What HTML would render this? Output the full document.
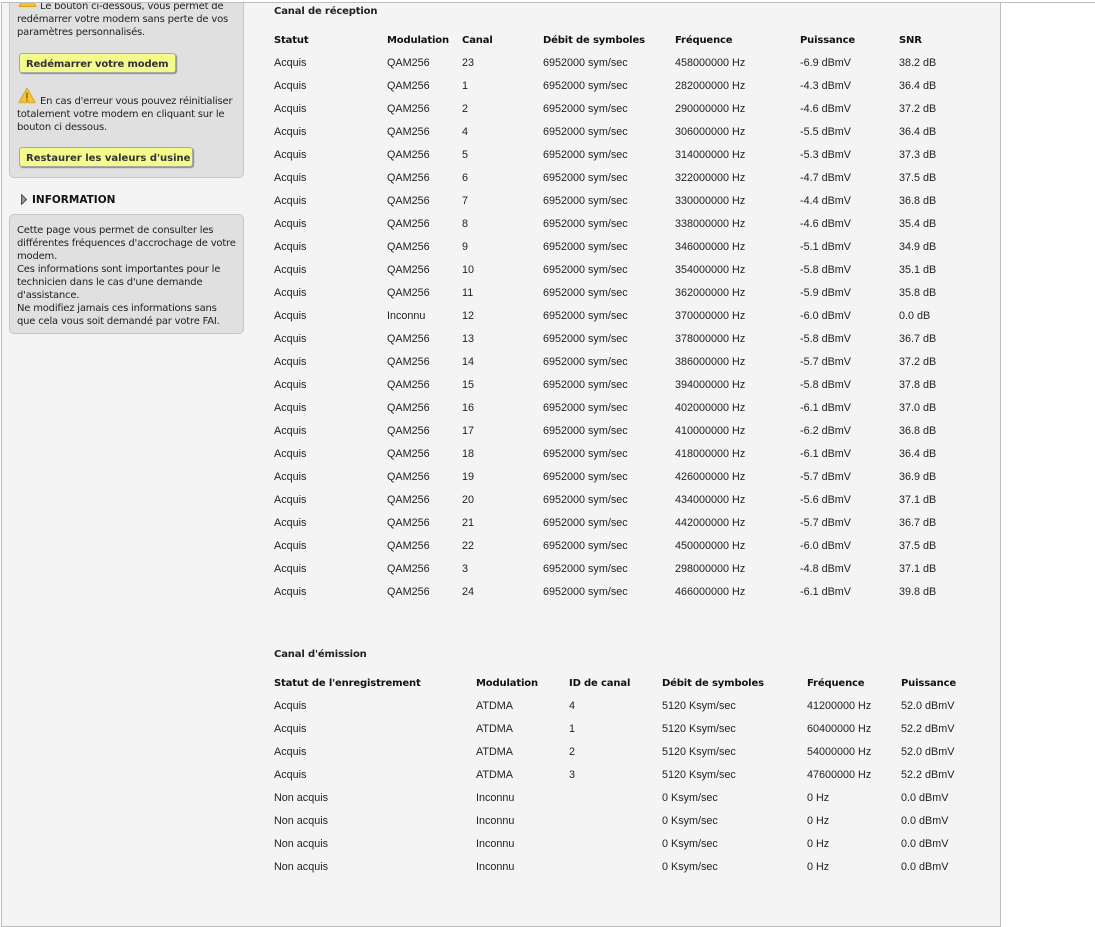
<!DOCTYPE html>
<html><head><meta charset="utf-8"><style>
html,body{margin:0;padding:0;background:#fff;width:1095px;height:927px;overflow:hidden}
body{font-family:"Liberation Sans",sans-serif;font-size:11px;color:#222;position:relative}
#top{position:absolute;left:1px;top:2px;width:1094px;height:1px;background:#bdbdbd}
#panel{position:absolute;left:1px;top:2px;width:998px;height:923px;background:#f4f4f4;border:1px solid #bdbdbd;overflow:hidden}
.abs{position:absolute;left:0;top:0;width:1095px;height:927px}
.box{position:absolute;left:9px;width:233px;background:#e0e0e0;border:1px solid #c6c6c6;border-radius:5px}
.t{position:absolute;left:17px;line-height:13px;white-space:nowrap;color:#222;font-family:"DejaVu Sans",sans-serif;font-size:10px;letter-spacing:-.2px}
.btn{position:absolute;left:20px;height:18px;line-height:21px;padding-left:6px;box-sizing:border-box;background:#f5fa8c;box-shadow:0 0 0 1px #a8a8a8,1px 1px 1px 1px #8a8a8a;border-radius:2px;font-family:"DejaVu Sans",sans-serif;font-weight:bold;font-size:10px;letter-spacing:-.15px;color:#333;text-align:left;white-space:nowrap}
h4{position:absolute;margin:0;font-family:"DejaVu Sans",sans-serif;font-size:10px;letter-spacing:-.15px;font-weight:bold;color:#222;line-height:13px;white-space:nowrap}
table{position:absolute;left:274px;border-collapse:collapse;table-layout:fixed;font-family:"Liberation Sans",sans-serif;font-size:10.8px}
td,th{padding:0;height:23px;line-height:23px;text-align:left;white-space:nowrap;font-weight:normal;color:#222}
th{font-family:"DejaVu Sans",sans-serif;font-weight:bold;font-size:10px;letter-spacing:-.15px;color:#111}
</style></head><body>
<div id="top"></div>
<div id="panel"></div>
<div class="abs" style="clip-path:inset(3px 0 0 0)">
<div class="box" style="top:-20px;height:196px"></div>
<svg style="position:absolute;left:18px;top:-9px" width="19" height="17" viewBox="0 0 19 17"><path d="M9.5 1L18 15.5H1Z" fill="#f5c02c" stroke="#d9a520" stroke-linejoin="round"/></svg>
<div class="t" style="top:0;left:40px">Le bouton ci-dessous, vous permet de</div>
<div class="t" style="top:13px">redémarrer votre modem sans perte de vos</div>
<div class="t" style="top:26px">paramètres personnalisés.</div>
<div class="btn" style="top:54px;width:155px">Redémarrer votre modem</div>
<svg style="position:absolute;left:18px;top:87px" width="18" height="17" viewBox="0 0 18 17"><path d="M9 1.2L17 15.5H1Z" fill="#f7c534" stroke="#dcae3a" stroke-width="1.4" stroke-linejoin="round"/><rect x="8.2" y="5.5" width="1.6" height="6" fill="#8a6a20"/><rect x="8.2" y="12.5" width="1.6" height="1.6" fill="#8a6a20"/></svg>
<div class="t" style="top:95px;left:40px">En cas d'erreur vous pouvez réinitialiser</div>
<div class="t" style="top:108px">totalement votre modem en cliquant sur le</div>
<div class="t" style="top:121px">bouton ci dessous.</div>
<div class="btn" style="top:148px;width:172px;letter-spacing:0">Restaurer les valeurs d'usine</div>
<svg style="position:absolute;left:21px;top:194px" width="6" height="11" viewBox="0 0 6 11"><path d="M.5 .5L5.5 5.5L.5 10.5Z" fill="#999" stroke="#333" stroke-width=".8"/></svg>
<h4 style="left:32px;top:194px;color:#111;font-size:10.5px;letter-spacing:0">INFORMATION</h4>
<div class="box" style="top:214px;height:118px"></div>
<div class="t" style="top:224px">Cette page vous permet de consulter les</div>
<div class="t" style="top:237px">différentes fréquences d'accrochage de votre</div>
<div class="t" style="top:250px">modem.</div>
<div class="t" style="top:263px">Ces informations sont importantes pour le</div>
<div class="t" style="top:276px">technicien dans le cas d'une demande</div>
<div class="t" style="top:289px">d'assistance.</div>
<div class="t" style="top:302px">Ne modifiez jamais ces informations sans</div>
<div class="t" style="top:315px">que cela vous soit demandé par votre FAI.</div>
<h4 style="left:274px;top:5px">Canal de réception</h4>
<table style="top:29px;width:720px">
<colgroup><col style="width:113px"><col style="width:75px"><col style="width:81px"><col style="width:132px"><col style="width:125px"><col style="width:99px"><col style="width:95px"></colgroup>
<tr><th>Statut</th><th>Modulation</th><th>Canal</th><th>Débit de symboles</th><th>Fréquence</th><th>Puissance</th><th>SNR</th></tr>
<tr><td>Acquis</td><td>QAM256</td><td>23</td><td>6952000 sym/sec</td><td>458000000 Hz</td><td>-6.9 dBmV</td><td>38.2 dB</td></tr>
<tr><td>Acquis</td><td>QAM256</td><td>1</td><td>6952000 sym/sec</td><td>282000000 Hz</td><td>-4.3 dBmV</td><td>36.4 dB</td></tr>
<tr><td>Acquis</td><td>QAM256</td><td>2</td><td>6952000 sym/sec</td><td>290000000 Hz</td><td>-4.6 dBmV</td><td>37.2 dB</td></tr>
<tr><td>Acquis</td><td>QAM256</td><td>4</td><td>6952000 sym/sec</td><td>306000000 Hz</td><td>-5.5 dBmV</td><td>36.4 dB</td></tr>
<tr><td>Acquis</td><td>QAM256</td><td>5</td><td>6952000 sym/sec</td><td>314000000 Hz</td><td>-5.3 dBmV</td><td>37.3 dB</td></tr>
<tr><td>Acquis</td><td>QAM256</td><td>6</td><td>6952000 sym/sec</td><td>322000000 Hz</td><td>-4.7 dBmV</td><td>37.5 dB</td></tr>
<tr><td>Acquis</td><td>QAM256</td><td>7</td><td>6952000 sym/sec</td><td>330000000 Hz</td><td>-4.4 dBmV</td><td>36.8 dB</td></tr>
<tr><td>Acquis</td><td>QAM256</td><td>8</td><td>6952000 sym/sec</td><td>338000000 Hz</td><td>-4.6 dBmV</td><td>35.4 dB</td></tr>
<tr><td>Acquis</td><td>QAM256</td><td>9</td><td>6952000 sym/sec</td><td>346000000 Hz</td><td>-5.1 dBmV</td><td>34.9 dB</td></tr>
<tr><td>Acquis</td><td>QAM256</td><td>10</td><td>6952000 sym/sec</td><td>354000000 Hz</td><td>-5.8 dBmV</td><td>35.1 dB</td></tr>
<tr><td>Acquis</td><td>QAM256</td><td>11</td><td>6952000 sym/sec</td><td>362000000 Hz</td><td>-5.9 dBmV</td><td>35.8 dB</td></tr>
<tr><td>Acquis</td><td>Inconnu</td><td>12</td><td>6952000 sym/sec</td><td>370000000 Hz</td><td>-6.0 dBmV</td><td>0.0 dB</td></tr>
<tr><td>Acquis</td><td>QAM256</td><td>13</td><td>6952000 sym/sec</td><td>378000000 Hz</td><td>-5.8 dBmV</td><td>36.7 dB</td></tr>
<tr><td>Acquis</td><td>QAM256</td><td>14</td><td>6952000 sym/sec</td><td>386000000 Hz</td><td>-5.7 dBmV</td><td>37.2 dB</td></tr>
<tr><td>Acquis</td><td>QAM256</td><td>15</td><td>6952000 sym/sec</td><td>394000000 Hz</td><td>-5.8 dBmV</td><td>37.8 dB</td></tr>
<tr><td>Acquis</td><td>QAM256</td><td>16</td><td>6952000 sym/sec</td><td>402000000 Hz</td><td>-6.1 dBmV</td><td>37.0 dB</td></tr>
<tr><td>Acquis</td><td>QAM256</td><td>17</td><td>6952000 sym/sec</td><td>410000000 Hz</td><td>-6.2 dBmV</td><td>36.8 dB</td></tr>
<tr><td>Acquis</td><td>QAM256</td><td>18</td><td>6952000 sym/sec</td><td>418000000 Hz</td><td>-6.1 dBmV</td><td>36.4 dB</td></tr>
<tr><td>Acquis</td><td>QAM256</td><td>19</td><td>6952000 sym/sec</td><td>426000000 Hz</td><td>-5.7 dBmV</td><td>36.9 dB</td></tr>
<tr><td>Acquis</td><td>QAM256</td><td>20</td><td>6952000 sym/sec</td><td>434000000 Hz</td><td>-5.6 dBmV</td><td>37.1 dB</td></tr>
<tr><td>Acquis</td><td>QAM256</td><td>21</td><td>6952000 sym/sec</td><td>442000000 Hz</td><td>-5.7 dBmV</td><td>36.7 dB</td></tr>
<tr><td>Acquis</td><td>QAM256</td><td>22</td><td>6952000 sym/sec</td><td>450000000 Hz</td><td>-6.0 dBmV</td><td>37.5 dB</td></tr>
<tr><td>Acquis</td><td>QAM256</td><td>3</td><td>6952000 sym/sec</td><td>298000000 Hz</td><td>-4.8 dBmV</td><td>37.1 dB</td></tr>
<tr><td>Acquis</td><td>QAM256</td><td>24</td><td>6952000 sym/sec</td><td>466000000 Hz</td><td>-6.1 dBmV</td><td>39.8 dB</td></tr>
</table>
<h4 style="left:274px;top:648px">Canal d'émission</h4>
<table style="top:672px;width:720px">
<colgroup><col style="width:202px"><col style="width:93px"><col style="width:93px"><col style="width:145px"><col style="width:94px"><col style="width:93px"></colgroup>
<tr><th>Statut de l'enregistrement</th><th>Modulation</th><th>ID de canal</th><th>Débit de symboles</th><th>Fréquence</th><th>Puissance</th></tr>
<tr><td>Acquis</td><td>ATDMA</td><td>4</td><td>5120 Ksym/sec</td><td>41200000 Hz</td><td>52.0 dBmV</td></tr>
<tr><td>Acquis</td><td>ATDMA</td><td>1</td><td>5120 Ksym/sec</td><td>60400000 Hz</td><td>52.2 dBmV</td></tr>
<tr><td>Acquis</td><td>ATDMA</td><td>2</td><td>5120 Ksym/sec</td><td>54000000 Hz</td><td>52.0 dBmV</td></tr>
<tr><td>Acquis</td><td>ATDMA</td><td>3</td><td>5120 Ksym/sec</td><td>47600000 Hz</td><td>52.2 dBmV</td></tr>
<tr><td>Non acquis</td><td>Inconnu</td><td></td><td>0 Ksym/sec</td><td>0 Hz</td><td>0.0 dBmV</td></tr>
<tr><td>Non acquis</td><td>Inconnu</td><td></td><td>0 Ksym/sec</td><td>0 Hz</td><td>0.0 dBmV</td></tr>
<tr><td>Non acquis</td><td>Inconnu</td><td></td><td>0 Ksym/sec</td><td>0 Hz</td><td>0.0 dBmV</td></tr>
<tr><td>Non acquis</td><td>Inconnu</td><td></td><td>0 Ksym/sec</td><td>0 Hz</td><td>0.0 dBmV</td></tr>
</table>
</div>
</body></html>
